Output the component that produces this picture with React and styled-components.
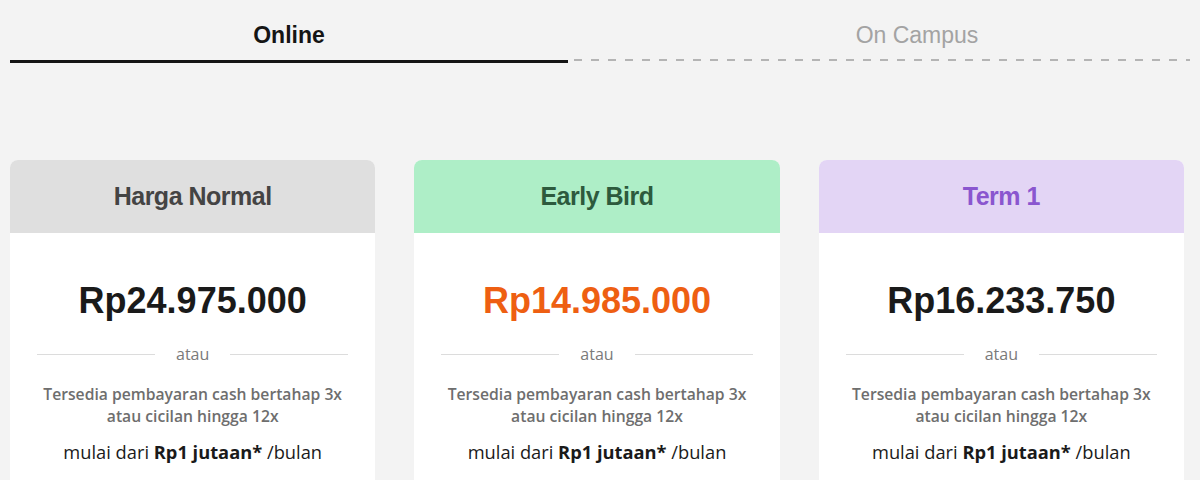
import React from "react";
import styled, { createGlobalStyle } from "styled-components";

const Global = createGlobalStyle`
  html, body { margin: 0; padding: 0; background: #f3f3f3; }
  body { font-family: "Liberation Sans", Arial, sans-serif; }
  * { box-sizing: border-box; }
`;

const Page = styled.div`
  width: 1200px;
  min-height: 480px;
  background: #f3f3f3;
`;

const TabBar = styled.div`
  display: flex;
  padding: 0 10px;
`;

const Tab = styled.div`
  flex: ${(p) => (p.$active ? "0 0 558px" : "1 1 auto")};
  padding: 22px 0 12px ${(p) => p.$offset || 0}px;
  text-align: center;
  font-family: "Liberation Sans", Arial, sans-serif;
  font-size: 23px;
  line-height: 26px;
  font-weight: ${(p) => (p.$active ? 700 : 400)};
  color: ${(p) => (p.$active ? "#151515" : "#a3a3a3")};
  border-bottom: 3px solid transparent;
  ${(p) =>
    p.$active
      ? `border-bottom-color: #151515;`
      : `background-image: repeating-linear-gradient(to right, #b4b4b4 0 8px, transparent 8px 17px);
         background-size: 100% 2px;
         background-repeat: no-repeat;
         background-position: 6px calc(100% + 1px);`}
`;

const Cards = styled.div`
  display: grid;
  grid-template-columns: repeat(3, 1fr);
  column-gap: 39px;
  padding: 97px 16px 0 10px;
`;

const Card = styled.div`
  background: #ffffff;
  border-radius: 8px;
  overflow: hidden;
  height: 340px;
`;

const CardHead = styled.div`
  height: 73px;
  display: flex;
  align-items: center;
  justify-content: center;
  background: ${(p) => p.$bg};
  color: ${(p) => p.$fg};
  font-family: "Liberation Sans", Arial, sans-serif;
  font-weight: 700;
  font-size: 25px;
  letter-spacing: -0.5px;
`;

const CardBody = styled.div`
  padding: 46px 24px 0;
  display: flex;
  flex-direction: column;
  align-items: stretch;
  text-align: center;
`;

const Price = styled.div`
  font-family: "Liberation Sans", Arial, sans-serif;
  font-weight: 700;
  font-size: 36px;
  line-height: 44px;
  color: ${(p) => p.$color || "#1a1a1a"};
`;

const Divider = styled.div`
  margin: 20px 3px 0;
  display: flex;
  align-items: center;
  gap: 21px;
  font-family: "Open Sans", sans-serif;
  font-size: 16px;
  line-height: 22px;
  color: #7a7a7a;
  &::before,
  &::after {
    content: "";
    flex: 1;
    height: 1px;
    background: #dcdcdc;
  }
`;

const Desc = styled.div`
  margin-top: 18px;
  font-family: "Open Sans", sans-serif;
  font-weight: 600;
  font-size: 15.7px;
  line-height: 22px;
  color: #6e6e6e;
`;

const Monthly = styled.div`
  margin-top: 12px;
  font-family: "Open Sans", sans-serif;
  font-size: 18.3px;
  line-height: 26px;
  color: #1a1a1a;
  b { font-weight: 700; }
`;

const plans = [
  { title: "Harga Normal", bg: "#dfdfdf", fg: "#444444", price: "Rp24.975.000" },
  { title: "Early Bird", bg: "#aeeec7", fg: "#2d5a3d", price: "Rp14.985.000", priceColor: "#ee5f12" },
  { title: "Term 1", bg: "#e3d5f5", fg: "#8a56cf", price: "Rp16.233.750" },
];

export default function App() {
  return (
    <Page>
      <Global />
      <TabBar>
        <Tab $active>Online</Tab>
        <Tab $offset={76}>On Campus</Tab>
      </TabBar>
      <Cards>
        {plans.map((p) => (
          <Card key={p.title}>
            <CardHead $bg={p.bg} $fg={p.fg}>{p.title}</CardHead>
            <CardBody>
              <Price $color={p.priceColor}>{p.price}</Price>
              <Divider>atau</Divider>
              <Desc>
                Tersedia pembayaran cash bertahap 3x
                <br />
                atau cicilan hingga 12x
              </Desc>
              <Monthly>
                mulai dari <b>Rp1 jutaan*</b> /bulan
              </Monthly>
            </CardBody>
          </Card>
        ))}
      </Cards>
    </Page>
  );
}
